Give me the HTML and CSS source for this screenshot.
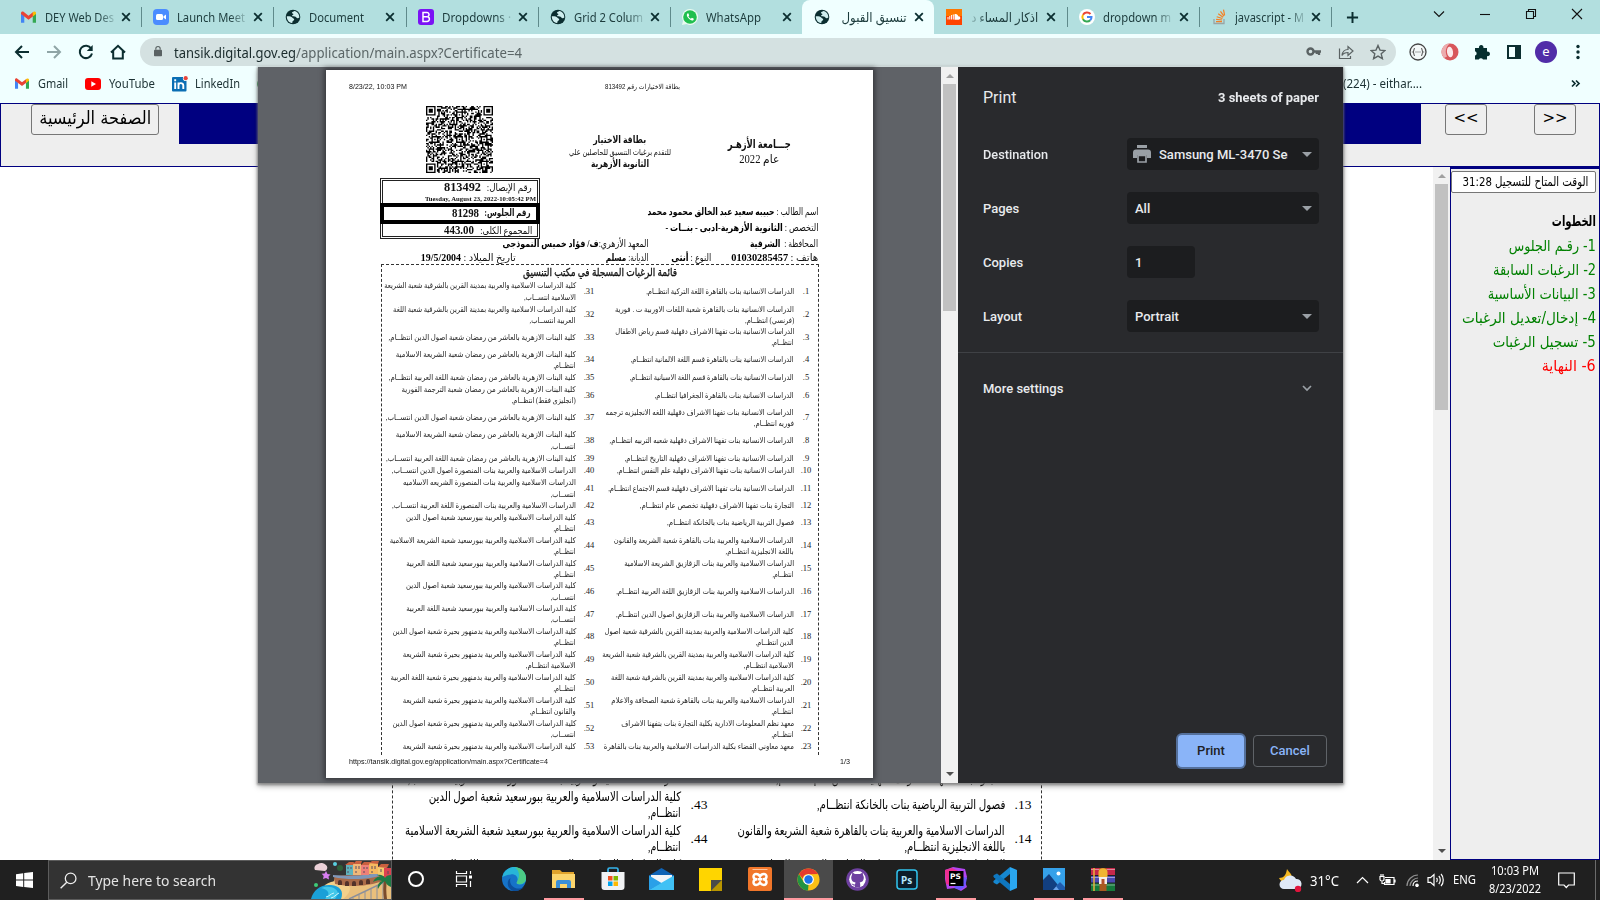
FILE: index.html
```html
<!DOCTYPE html>
<html lang="en">
<head>
<meta charset="utf-8">
<title>تنسيق القبول</title>
<link rel="stylesheet" href="styles.css">
</head>
<body>
<svg width="0" height="0" class="defs">
  <symbol id="x" viewBox="0 0 10 10"><path d="M1.2 1.2l7.6 7.6M8.8 1.2L1.2 8.8" stroke="currentColor" stroke-width="1.8" fill="none"/></symbol>
  <symbol id="globe" viewBox="0 0 16 16"><circle cx="8" cy="8" r="7.300" fill="#0b2e30"/><path d="M1.800 7.200c2.500-.2 4.700.3 5.400 1.400.5.900 2 .8 2 1.900 0 1.200-1.400 1-1.700 1.900-.2.700.2 1.200-.6 1.700C3.800 13.500 1.700 10.800 1.800 7.200zM9.300 2c-.6 1-2.300.7-2.400 1.700-.1.800 1.500.6 1.500 1.500 0 .8-1.500.6-1.300 1.600.2.900 2.500.6 3.500 1 .9.400 1 1.500 2 1.500.8 0 1-.6 1.700-.6C14.500 5.300 12.400 2.600 9.300 2z" fill="#cfeeee"/></symbol>
  <symbol id="gmail" viewBox="0 0 16 12"><path d="M0 1.500V12h3.500V5z" fill="#4285f4"/><path d="M16 1.500V12h-3.500V5z" fill="#34a853"/><path d="M0 1.700C0 .3 1.600-.4 2.700.5L8 4.600 13.300.5v4.300L8 8.900 3.500 5.400 0 2.800z" fill="#ea4335"/><path d="M12.500 1.100C14-.5 16 .3 16 1.800v1l-3.500 2.700z" fill="#fbbc04"/></symbol>
  <symbol id="chrome" viewBox="0 0 24 24"><circle cx="12" cy="12" r="11.500" fill="#fbc116"/><path d="M2 6.300A11.500 11.500 0 0 1 22 6.300L12 6.500z" fill="#e33b2e"/><path d="M2 6.300L7.200 15 12 17.500 11.500 23.500A11.500 11.500 0 0 1 2 6.300z" fill="#229342"/><path d="M22 6.300H12A5.700 5.700 0 0 0 6 11L2 6.300z" fill="#e33b2e"/><circle cx="12" cy="12" r="5.600" fill="#fff"/><circle cx="12" cy="12" r="4.400" fill="#1a73e8"/></symbol>
</svg>

<header class="tabs">
  <div class="tab"><svg class="ico"><use href="#gmail"/></svg><span class="lbl" data-w="69">DEY Web Des</span><svg class="cls"><use href="#x"/></svg></div>
  <div class="tab"><svg class="ico" viewBox="0 0 16 16"><rect width="16" height="16" rx="4" fill="#4a8cff"/><rect x="3" y="5" width="7" height="6" rx="1.500" fill="#fff"/><path d="M10.500 7.300L13 5.500v5l-2.500-1.800z" fill="#fff"/></svg><span class="lbl" data-w="68">Launch Meet</span><svg class="cls"><use href="#x"/></svg></div>
  <div class="tab"><svg class="ico"><use href="#globe"/></svg><span class="lbl nofade" data-w="55">Document</span><svg class="cls"><use href="#x"/></svg></div>
  <div class="tab"><svg class="ico" viewBox="0 0 16 16"><rect width="16" height="16" rx="3" fill="#7a12f5"/><path d="M5 3.500h3.700a2.100 2.100 0 0 1 .5 4.200 2.300 2.300 0 0 1-.3 4.700H5zM5 7.800h4" fill="none" stroke="#fff" stroke-width="1.500"/></svg><span class="lbl" data-w="69">Dropdowns ·</span><svg class="cls"><use href="#x"/></svg></div>
  <div class="tab"><svg class="ico"><use href="#globe"/></svg><span class="lbl" data-w="69">Grid 2 Colum</span><svg class="cls"><use href="#x"/></svg></div>
  <div class="tab nosep"><svg class="ico" viewBox="0 0 16 16"><path d="M8 0a8 8 0 1 1-3.600 15.100L0 16l1-4.200A8 8 0 0 1 8 0z" fill="#e9fbf0"/><circle cx="8" cy="8" r="6.800" fill="#1fbf4f"/><path d="M5.700 4.200c-1.500 1-1 3 .6 4.900 1.700 1.900 3.900 3 5.200 1.800l.3-1.200-1.900-1-1 1C7.800 9.300 6.800 8.300 6.400 7.300l.8-.9-.7-2z" fill="#fff"/></svg><span class="lbl nofade" data-w="55">WhatsApp</span><svg class="cls"><use href="#x"/></svg></div>
  <div class="tab active"><svg class="ico"><use href="#globe"/></svg><span class="lbl ar nofade" data-w="65">تنسيق القبول</span><svg class="cls"><use href="#x"/></svg></div>
  <div class="tab"><svg class="ico" viewBox="0 0 16 16"><rect width="16" height="16" fill="#f40"/><path d="M0 0h16v7H0z" fill="#ff7700"/><path d="M2 8v2.500M3.800 7v3.500M5.600 6v4.500M7.300 5.500v5" stroke="#fff" stroke-width="1"/><path d="M8.500 5.300c2-.8 3.400 .4 3.600 2 1.200-.2 2.200 .5 2.200 1.700s-.9 1.700-1.700 1.700H8.500z" fill="#fff"/></svg><span class="lbl ar" data-w="67">اذكار المساء د</span><svg class="cls"><use href="#x"/></svg></div>
  <div class="tab"><svg class="ico" viewBox="0 0 16 16"><circle cx="8" cy="8" r="8" fill="#fff"/><g fill="none" stroke-width="2"><path d="M11.500 5A4.600 4.600 0 0 0 4 5.800" stroke="#ea4335"/><path d="M4 5.800a4.600 4.600 0 0 0 0 4.600" stroke="#fbbc04"/><path d="M4 10.300a4.600 4.600 0 0 0 7.200 1" stroke="#34a853"/><path d="M11.200 11.300A4.600 4.600 0 0 0 12.500 8H8" stroke="#4285f4"/></g></svg><span class="lbl" data-w="68">dropdown m</span><svg class="cls"><use href="#x"/></svg></div>
  <div class="tab"><svg class="ico" viewBox="0 0 16 16"><path d="M3 10v4.500h10V10" fill="none" stroke="#9aa5a6" stroke-width="1.300"/><path d="M5 12.700h6M5.100 10.400l6 .6M5.700 7.700l5.700 1.800M7.200 4.800l4.900 3.400M9.500 2.300l3.400 4.900M12.500.7l1.100 5.600" stroke="#f48024" stroke-width="1.200"/></svg><span class="lbl" data-w="69">javascript - M</span><svg class="cls"><use href="#x"/></svg></div>
  <svg class="plus" viewBox="0 0 14 14"><path d="M7 1v12M1 7h12" stroke="#0b2e30" stroke-width="2.100"/></svg>
  <div class="win">
    <svg viewBox="0 0 12 12"><path d="M1 3.500l5 5 5-5"/></svg>
    <svg viewBox="0 0 12 12"><path d="M1 6.500h10"/></svg>
    <svg viewBox="0 0 12 12"><path d="M1.500 3.500h7v7h-7zM3.500 3.500v-2h7v7h-2"/></svg>
    <svg viewBox="0 0 12 12"><path d="M1 1l10 10M11 1L1 11"/></svg>
  </div>
</header>

<div class="toolbar">
  <svg class="nav" viewBox="0 0 16 16"><path d="M15 8H2M8 2L2 8l6 6" /></svg>
  <svg class="nav dim" viewBox="0 0 16 16"><path d="M1 8h13M8 2l6 6-6 6"/></svg>
  <svg class="nav" viewBox="0 0 16 16"><path d="M13.200 4.500A6.200 6.200 0 1 0 14 9.500"/><path d="M14.700 1v6H8.800z" fill="#0b2e30" stroke="none"/></svg>
  <svg class="nav home" viewBox="0 0 16 16"><path d="M1 8.500L8 1.800l7 6.700M3.200 7v7.500h9.600V7"/></svg>
  <div class="omni">
    <svg class="lock" viewBox="0 0 10 13"><rect y="5" width="10" height="8" rx="1" fill="#5a6263"/><path d="M2.300 5V3.500a2.700 2.700 0 0 1 5.400 0V5" fill="none" stroke="#5a6263" stroke-width="1.400"/></svg>
    <span class="url" data-w="122">tansik.digital.gov.eg</span><span class="url path" data-w="226">/application/main.aspx?Certificate=4</span>
    <div class="omni-r">
      <svg width="16" height="16" viewBox="0 0 16 16"><circle cx="4.500" cy="7.500" r="3" fill="none" stroke="#5a6263" stroke-width="2.400"/><path d="M7 7.500h8M13 8v3M10.800 8v2" stroke="#5a6263" stroke-width="2.300"/></svg>
      <svg width="16" height="16" viewBox="0 0 16 16"><path d="M1.500 4.500v10h11v-2.500M4 11.500c.5-4 3-6 6-6V2.500L15 7l-5 4.500V8.500c-3 0-4.800 1-6 3z" fill="none" stroke="#5a6263" stroke-width="1.200"/></svg>
      <svg width="16" height="16" viewBox="0 0 16 16"><path d="M8 1.500l2 4.600 5 .4-3.800 3.300 1.200 4.900L8 12.100l-4.400 2.600 1.200-4.900L1 6.500l5-.4z" fill="none" stroke="#5a6263" stroke-width="1.400"/></svg>
    </div>
  </div>
  <div class="ext">
    <svg viewBox="0 0 18 18"><circle cx="9" cy="9" r="8" fill="#f4f8f8" stroke="#444" stroke-width="1.300"/><path d="M6 5.500c-2 0-.5 3-2 3.500 1.500.5 0 3.500 2 3.500M12 5.500c2 0 .5 3 2 3.500-1.500.5 0 3.500-2 3.500M6.500 9h1M8.500 9h1M10.500 9h1" fill="none" stroke="#555" stroke-width="1.100"/></svg>
    <svg viewBox="0 0 18 18"><circle cx="9" cy="9" r="8.500" fill="#d8575b"/><ellipse cx="9" cy="9" rx="3" ry="5.300" fill="#fbe9ea" transform="rotate(-8 9 9)"/><path d="M9 .5A8.500 8.500 0 0 0 3 15l3-1.500C3.500 9 5 3 9 .5z" fill="#ecacae"/></svg>
    <svg viewBox="0 0 18 18"><path d="M2 5h4a2.300 2.300 0 1 1 4.400 0H14v3.700a2.300 2.300 0 1 1 0 4.400V16.500h-4a2.300 2.300 0 0 0-4.200 0H2V12.600a2.300 2.300 0 0 0 0-4.400z" fill="#062f2f"/></svg>
    <svg viewBox="0 0 18 18"><path d="M3 3h12v12H3z" fill="none" stroke="#0b2e30" stroke-width="2"/><path d="M10 3h5v12h-5z" fill="#0b2e30"/></svg>
    <span class="avatar">e</span>
    <svg class="dots" viewBox="0 0 18 18"><circle cx="9" cy="3.500" r="1.700"/><circle cx="9" cy="9" r="1.700"/><circle cx="9" cy="14.500" r="1.700"/></svg>
  </div>
</div>

<div class="marks">
  <svg class="bi g" width="14" height="11"><use href="#gmail"/></svg><span data-w="30">Gmail</span>
  <svg class="bi yt" width="16" height="12" viewBox="0 0 16 12"><rect width="16" height="12" rx="3" fill="#f00"/><path d="M6.300 3.300v5.400L11 6z" fill="#fff"/></svg><span data-w="46">YouTube</span>
  <svg class="bi li" width="16" height="16" viewBox="0 0 16 16"><rect y="1" width="14.500" height="14.500" rx="1" fill="#0a6eb4"/><path d="M3.200 6.500v6.500M3.200 3.300v2M6.500 13V6.500M6.500 9.500c0-3 4.800-3.200 4.800 0V13" fill="none" stroke="#fff" stroke-width="1.900"/><circle cx="13.700" cy="2.200" r="2.800" fill="#f0ffff"/><circle cx="13.700" cy="2.200" r="2.100" fill="#e8453c"/></svg><span data-w="45">LinkedIn</span>
  <i class="green"></i>
  <span class="mail" data-w="79">(224) - eithar....</span>
  <svg class="more" viewBox="0 0 10 8"><path d="M1 1l3 3-3 3M5 1l3 3-3 3" fill="none" stroke="#0b2e30" stroke-width="1.700"/></svg>
</div>

<section class="top">
  <div class="c1"><span class="btn home-b" dir="rtl"><span data-w="112">الصفحة الرئيسية</span></span></div>
  <div class="band"></div>
  <div class="c2"><span class="btn sm">&lt;&lt;</span><span class="btn sm">&gt;&gt;</span></div>
</section>

<section class="mid">
  <div class="content"><div class="list big" id="pageList"></div></div>
  <div class="sb page-sb"><i class="up"></i><i class="thumb"></i><i class="down"></i></div>
  <aside dir="rtl">
    <div class="timer"><span data-w="126">الوقت المتاح للتسجيل 31:28</span></div>
    <p class="h"><span data-w="44">الخطوات</span></p>
    <p><span data-w="87">1- رقـم الجلوس</span></p>
    <p><span data-w="103">2- الرغبات السابقة</span></p>
    <p><span data-w="108">3- البيانات الأساسية</span></p>
    <p><span data-w="134">4- إدخال/تعديل الرغبات</span></p>
    <p><span data-w="103">5- تسجيل الرغبات</span></p>
    <p class="red"><span data-w="54">6- النهاية</span></p>
  </aside>
</section>

<footer class="task">
  <div class="start"><svg width="17" height="16" viewBox="0 0 17 16"><path d="M0 2.300L7.200 1.200V7.600H0zM8.200 1L17 0v7.600H8.200zM0 8.600h7.200V15L0 13.900zM8.200 8.600H17V16l-8.800-1.100z" fill="#fff"/></svg></div>
  <div class="search">
    <svg class="mag" viewBox="0 0 16 16"><circle cx="10" cy="6" r="5" fill="none" stroke="#eee" stroke-width="1.200"/><path d="M6.400 9.600L.6 15.400" stroke="#eee" stroke-width="1.300"/></svg>
    <span data-w="128">Type here to search</span>
    <svg class="art" viewBox="0 0 80 38">
      <path d="M24 17h50l6-3v24H16z" fill="#e9bf7c"/><path d="M14 24c8-6 20-5 24 1 3 4-2 10-6 13H8z" fill="#f3d08b"/>
      <path d="M0 38c2-9 10-15 20-14 9 1 13 6 10 14z" fill="#1aa0d8"/><path d="M10 27c8-3 17 0 17 6l-3 5H14c6-5 4-9-4-11z" fill="#43c8ea"/><path d="M15 36c4-1 4-3 8-4M20 37c4-1 4-3 8-5" stroke="#c9f4fb" fill="none"/>
      <path d="M23 15l55-3v5c-14 8-36 10-54 6z" fill="#a96a48"/><path d="M22 14c20 2 40 0 57-5v3c-16 6-38 8-57 4z" fill="#7f97b8"/>
      <path d="M27 24v-3a2 2 0 0 1 4 0v3M34 25v-3a2 2 0 0 1 4 0v3M41 25v-3a2 2 0 0 1 4 0v3M48 24v-3a2 2 0 0 1 4 0v3M55 23v-3a2 2 0 0 1 4 0v3" fill="#52322a"/>
      <path d="M35 4h7v10h-7z" fill="#5fb3bd"/><path d="M42 3h8v11h-8z" fill="#f0b878"/><path d="M50 4h8v10h-8z" fill="#ee8078"/><path d="M58 2h9v11h-9z" fill="#f5b95f"/><path d="M67 6h8v9h-8z" fill="#f2ca70"/><path d="M73 7h7v10h-7z" fill="#dd4250"/>
      <path d="M34 4l4-3h5l-1 3zM42 3l3-3h6l-1 3zM50 4l3-3h6l-1 3zM58 2l3-2h7l-1 3zM67 6l3-3h8l-2 4z" fill="#c9603f"/>
      <path d="M37 6v2M40 6v2M45 5v3M48 5v3M53 6v2M56 6v2M61 5v3M64 5v3M70 8v3M37 10v2M45 10v2M53 10v2M61 10v2M77 10v3" stroke="#5a4a60"/>
      <path d="M38 38l42-20" stroke="#8a8f9c" stroke-width="1.500"/><path d="M42 37v2M48 34v5M54 31v8M60 28v11M66 25v13M72 22v16" stroke="#8a8f9c"/>
      <path d="M73 19c-1 6-1 12 0 19h3c-1-7-1-13 0-19z" fill="#7b4c2c"/><path d="M74 18c-5-4-10-2-12 3 4-2 7-2 9-1-3 1-5 4-4 8 2-4 4-6 7-8 1 3 3 5 6 6V14c-3 0-5 1-6 3-1-2-4-4-8-3z" fill="#1e7a45"/>
      <circle cx="29" cy="7" r="3" fill="#2e5f38"/><path d="M4 9a4 4 0 0 1 3-6 6 6 0 0 1 8 1 3.500 3.500 0 0 1-1 6z" fill="#ecd1d8"/><path d="M15 10l1.500 3 3 .5-2 2 .5 3-3-1.500-3 1 .7-3-2-2.300 3-.3z" fill="#d77df0"/><circle cx="24" cy="3" r="2" fill="#5ad0e0"/><circle cx="5" cy="24" r="2" fill="#3ecb79"/>
    </svg>
  </div>
  <div class="tb n"><svg width="18" height="18" viewBox="0 0 18 18"><circle cx="9" cy="9" r="7" fill="none" stroke="#fff" stroke-width="2"/></svg></div>
  <div class="tb n"><svg width="18" height="16" viewBox="0 0 18 16" fill="none" stroke="#fff" stroke-width="1.200"><path d="M1.500 0v2.500h10V0M1.500 16v-2.500h10V16M1.500 5h10v6h-10zM15.500 0v3M15.500 10v6"/><path d="M14 4.500h3v3h-3z" fill="#fff" stroke="none"/></svg></div>
  <div class="tb e"><svg width="24" height="24" viewBox="0 0 24 24"><circle cx="12" cy="12" r="12" fill="#1673c8"/><path d="M.3 10C2 3 8-1 15 .4c6 1.400 9 6 9 11 0 4-3 6-6.500 6-2.500 0-3.500-1-2.500-2.500 2-4-1-8-6-7.500-4 .3-7 2-8.700 2.600z" fill="#27b5d8"/><path d="M13 .1c7 .5 11 5.500 11 11 0 4-3 6.200-6.500 6.200-2.500 0-3.500-1-2.500-2.500 3-5 3-10-2-14.700z" fill="#5ad36a" opacity=".75"/><path d="M8.500 11c-2 6 3 11 9 10.500 2-.2 3.500-1 4.500-2-2 3-6 5-10.500 4.500C5 22 4 14 8.500 11z" fill="#0c4f9c"/></svg></div>
  <div class="tb u"><svg width="23" height="20" viewBox="0 0 23 20"><path d="M0 1h8l2 2h12v16H0z" fill="#e0a32c"/><path d="M0 5h23v14H0z" fill="#fcd56c"/><path d="M4 19v-6a2 2 0 0 1 2-2h11a2 2 0 0 1 2 2v6h-4v-4H8v4z" fill="#3a8fd8"/></svg></div>
  <div class="tb"><svg width="24" height="24" viewBox="0 0 24 24"><path d="M7 6V2.500C7 1.500 7.500 1 8.500 1h7c1 0 1.500.5 1.500 1.500V6" fill="none" stroke="#35b4ec" stroke-width="1.700"/><path d="M.5 5h23v15a3 3 0 0 1-3 3h-17a3 3 0 0 1-3-3z" fill="#f1f2f4"/><path d="M7 9h4.500v4.500H7z" fill="#f25022"/><path d="M12.500 9H17v4.500h-4.500z" fill="#7fba00"/><path d="M7 14.500h4.500V19H7z" fill="#00a4ef"/><path d="M12.500 14.500H17V19h-4.500z" fill="#ffb900"/></svg></div>
  <div class="tb"><svg width="25" height="22" viewBox="0 0 25 22"><path d="M0 7.500L12.500 0 25 7.500V22H0z" fill="#0f63b5"/><path d="M2 7h21v8H2z" fill="#f2f5f8"/><path d="M0 7.500L12.500 15 0 22z" fill="#2aa0e8"/><path d="M25 7.500L0 22h25z" fill="#40c1f5"/></svg></div>
  <div class="tb"><svg width="23" height="23" viewBox="0 0 23 23"><path d="M0 0h23v12L12 23H0z" fill="#ffd500"/><path d="M12 23V12h11z" fill="#4a4a4a"/><path d="M12 23L23 12v11z" fill="#b99500"/></svg></div>
  <div class="tb"><svg width="24" height="24" viewBox="0 0 24 24"><rect width="24" height="24" rx="2" fill="#f1762a"/><path d="M4.500 2.500h15" stroke="#ffc49c"/><path d="M12 9.500C10.500 6.500 5.500 6 5.500 9.500c0 2 1.500 2.800 3.500 2.800-2 0-3.500.7-3.500 3 0 3.700 5 3.200 6.500.2 1.500 3 6.500 3.500 6.500-.2 0-2.300-1.500-3-3.500-3 2 0 3.500-.8 3.500-2.800C18.500 6 13.500 6.500 12 9.500zM9.500 12.300h5" fill="none" stroke="#fff" stroke-width="2.500"/></svg></div>
  <div class="tb on"><svg width="23" height="23"><use href="#chrome"/></svg></div>
  <div class="tb"><svg width="23" height="23" viewBox="0 0 23 23"><circle cx="11.500" cy="11.500" r="11.300" fill="#6e40a0"/><circle cx="11.500" cy="11.300" r="8.300" fill="#fff"/><path d="M6 7l.3-2.500L9 6h5l2.700-1.500L17 7c1.500 2 1.200 7-3.300 7.500.8 1 .5 3 .5 5H8.800v-2C7 17.500 6.500 17 5.500 15.500c1.500 0 1.500 1.200 3.500 1l.5-2C5 14 4.500 9 6 7z" fill="#6e40a0"/></svg></div>
  <div class="tb"><svg width="22" height="21" viewBox="0 0 22 21"><rect x="1" y="1" width="20" height="19" rx="3" fill="#0b1c2a" stroke="#31c5f0" stroke-width="1.500"/><text x="5" y="14.500" class="ps">Ps</text></svg></div>
  <div class="tb u"><svg width="24" height="24" viewBox="0 0 24 24"><path d="M1 3l8-3 12 2 2 8-2 5 2 5-6 4-6-3-8 1L1 12z" fill="#b345f1"/><path d="M1 3l7-2 6 3-8 14-4-1z" fill="#ee2f8f"/><path d="M17 9l6 2-2 9-5 3-6-2z" fill="#6b57ff"/><rect x="5" y="4" width="14.500" height="15" fill="#000"/><text x="6" y="12" class="pst">PS</text><path d="M6.500 16.500h5" stroke="#fff" stroke-width="1.200"/></svg></div>
  <div class="tb"><svg width="24" height="24" viewBox="0 0 24 24"><path d="M17 0l7 3v18l-7 3z" fill="#2aa7f0"/><path d="M17 0v7L4 17.500 1 16c-1-1-.8-1.700 0-2.400z" fill="#1687d0"/><path d="M17 24v-7L4 6.500 1 8c-1 1-.8 1.700 0 2.400z" fill="#0f77bf"/></svg></div>
  <div class="tb u"><svg width="22" height="22" viewBox="0 0 22 22"><rect width="22" height="22" fill="#35a1ea"/><path d="M0 22V12l6-6 13 16z" fill="#123f80"/><path d="M10 22l7-8 5 5v3z" fill="#6aa2e8"/><path d="M13 18l4-4 5 5v3h-6z" fill="#1f5cae"/><circle cx="15.500" cy="5.500" r="2" fill="#fff"/></svg></div>
  <div class="tb u"><svg width="24" height="23" viewBox="0 0 24 23"><path d="M0 0h24v7H0z" fill="#c6284a"/><path d="M0 8h24v6.500H0z" fill="#4a48b0"/><path d="M0 15.500h24V23H0z" fill="#167a3c"/><path d="M0 1.500h24M0 9.500h24M0 17h24" stroke="#fff" stroke-opacity=".45"/><path d="M3 0v23" stroke="#e9b23c" stroke-width="1.500"/><path d="M8.500 0h7v23h-7z" fill="#a85a20"/><path d="M7.500 4c0-5 9-5 9 0v5h-9z" fill="#f0b432"/><path d="M8 9h8v7H8z" fill="#f5efe8"/><path d="M10.500 11h3v5h-3z" fill="#b5502a"/></svg></div>
  <div class="tray">
    <svg class="wx" width="23" height="23" viewBox="0 0 23 23"><path d="M8 0c-1 6-3 9-8 9 2 5 9 6 12 0C14 5 10 4 8 0z" fill="#f5b820"/><path d="M5 20a4.500 4.500 0 0 1 0-9 6.500 6.500 0 0 1 12-1 5 5 0 0 1 1 10z" fill="#dfe8f6"/><circle cx="19" cy="20" r="3.200" fill="#e0143c"/></svg>
    <span class="deg" data-w="29">31°C</span>
    <svg class="t1" width="13" height="8" viewBox="0 0 13 8"><path d="M1 7l5.500-5.500L12 7"/></svg>
    <svg class="t2" width="17" height="14" viewBox="0 0 17 14"><path d="M6 4.500h9v7H5.500V9M16 6.500v3M1 3.500v3c0 2 4 2 4 0v-3zM2 3.500V1M4 3.500V1M3 8v2.500h2"/><path d="M7 6.500h4v3.500H7z" fill="#fff"/></svg>
    <svg class="t3" width="13" height="13" viewBox="0 0 13 13"><g opacity=".5"><path d="M1 12C1 6 6 1 12 1M4 12c0-4 4-8 8-8"/></g><path d="M7 12c0-3 2-5 5-5"/><circle cx="11" cy="11.300" r="1.200" fill="#fff"/></svg>
    <svg class="t4" width="17" height="14" viewBox="0 0 17 14"><path d="M1 4.700h2.500L7 1.500v11L3.500 9.300H1zM9.500 5c1 1 1 3 0 4M11.800 3c2 2 2 6 0 8M14 1c3 3 3 9 0 12"/></svg>
    <span class="eng" data-w="23">ENG</span>
    <div class="clock"><span data-w="48">10:03 PM</span><span data-w="52">8/23/2022</span></div>
    <svg class="t5" width="17" height="17" viewBox="0 0 17 17"><path d="M.7 1h15.600v12H10.500L8.300 15.500 6 13H.7z"/></svg>
    <i class="peek"></i>
  </div>
</footer>

<div class="dialog">
  <div class="preview">
    <div class="paper">
      <div class="ph"><span data-w="58">8/23/22, 10:03 PM</span><span dir="rtl" data-w="75">بطاقة الاختيارات رقم 813492</span></div>
      <div class="mast">
        <svg id="qr" viewBox="0 0 49 49" preserveAspectRatio="none"></svg>
        <div class="card" dir="rtl"><b data-w="53">بطاقة الاختيار</b><span data-w="102">للتقدم برغبات التنسيق للحاصلين علي</span><b data-w="58">الثانوية الأزهرية</b></div>
        <div class="uni" dir="rtl"><b data-w="63">جـــامعة الأزهـر</b><span data-w="40">عام 2022</span></div>
      </div>
      <div class="info">
        <div class="nums" dir="rtl">
          <div class="n1"><div><span data-w="45">رقم الإيصال:</span><b data-w="37">813492</b></div><b class="dt" dir="ltr" data-w="111">Tuesday, August 23, 2022-10:05:42 PM</b></div>
          <div class="n2"><b data-w="46">رقم الجلوس:</b><b data-w="27">81298</b></div>
          <div class="n3"><span data-w="52">المجموع الكلي:</span><b data-w="30">443.00</b></div>
        </div>
        <div class="stu" dir="rtl"><span data-w="171">اسم الطالب : <b>حبيبه سعيد عبد الخالق محمود محمد</b></span><span data-w="153">التخصص : <b>الثانوية الأزهرية-ادبى - بنــات -</b></span></div>
      </div>
      <div class="ir" dir="rtl"><span data-w="68">المحافظة : <b>&nbsp;الشرقية</b></span><span class="g101" data-w="146">المعهد الأزهري:<b>ف/ فؤاد خميس النموذجى</b></span></div>
      <div class="ir" dir="rtl"><span data-w="87">هاتف : <b>01030285457</b></span><span class="g20" data-w="40">النوع : <b>أنثى</b></span><span class="g22" data-w="43">الديانة: <b>مسلم</b></span><span class="g90" data-w="95">تاريخ الميلاد : <b>19/5/2004</b></span></div>
      <div class="list small"><div class="lt" dir="rtl"><b data-w="154">قائمة الرغبات المسجلة في مكتب التنسيق</b></div><div id="prevList"></div></div>
      <div class="pf"><span data-w="199">https://tansik.digital.gov.eg/application/main.aspx?Certificate=4</span><span data-w="10">1/3</span></div>
    </div>
  </div>
  <div class="sb prev-sb"><i class="up"></i><i class="thumb"></i><i class="down"></i></div>
  <div class="panel">
    <div class="pt"><span class="ttl">Print</span><span class="sheets" data-w="101">3 sheets of paper</span></div>
    <div class="row"><label data-w="65">Destination</label><div class="sel dest"><svg width="18" height="18" viewBox="0 0 18 18"><path d="M4 0h10v3H4z" fill="#9aa0a6"/><path d="M3 4.500h12a3 3 0 0 1 3 3V13h-4v-3H4v3H0V7.500a3 3 0 0 1 3-3z" fill="#9aa0a6"/><path d="M5 10.500h8v6.500H5z" fill="none" stroke="#9aa0a6" stroke-width="1.700"/></svg><span class="dn">Samsung ML-3470 Series</span><i></i></div></div>
    <div class="row"><label>Pages</label><div class="sel">All<i></i></div></div>
    <div class="row"><label>Copies</label><div class="sel short">1</div></div>
    <div class="row"><label>Layout</label><div class="sel">Portrait<i></i></div></div>
    <div class="ms"><span>More settings</span><svg width="10" height="7" viewBox="0 0 10 7"><path d="M1 1l4 4 4-4" fill="none" stroke="#9aa0a6" stroke-width="1.700"/></svg></div>
    <div class="acts"><button class="pr">Print</button><button class="ca">Cancel</button></div>
  </div>
</div>
<script src="app.js"></script>
</body>
</html>
```
FILE: styles.css
```css
* { box-sizing: border-box; }
body { margin: 0; width: 1600px; height: 900px; overflow: hidden; position: relative; background: #fff; font-family: "Noto Sans", "DejaVu Sans", sans-serif; font-size: 12px; display: flex; flex-direction: column; }
svg { display: block; flex: none; }
.defs { position: absolute; }
.fit { display: inline-block; white-space: nowrap; flex: none; }
.fit > .in { display: inline-block; transform-origin: 0 50%; }
[dir=rtl] .fit > .in, .ar > .in, .fit[dir=rtl] > .in { transform-origin: 100% 50%; }
[dir=rtl] .fit[dir=ltr] > .in { transform-origin: 0 50%; }

/* tab strip */
.tabs { height: 34px; flex: none; background: #b2dfdf; display: flex; align-items: center; padding-left: 9px; color: #1c3b3c; }
.tab { width: 132.2px; height: 34px; flex: none; display: flex; align-items: center; padding-left: 12px; position: relative; }
.tab::after { content: ""; position: absolute; right: -1px; top: 7px; width: 1px; height: 20px; background: #5f8a8b; }
.nosep::after, .active::after { display: none; }
.ico { width: 16px; height: 16px; margin-right: 8px; }
.tab:first-child .ico { height: 12px; width: 15px; margin-right: 9px; }
.lbl { -webkit-mask-image: linear-gradient(90deg, #000 78%, rgba(0,0,0,.2)); mask-image: linear-gradient(90deg, #000 78%, rgba(0,0,0,.2)); }
.ar { direction: rtl; margin-left: auto; margin-right: 28px; font-size: 13px; -webkit-mask-image: linear-gradient(270deg, #000 78%, rgba(0,0,0,.2)); mask-image: linear-gradient(270deg, #000 78%, rgba(0,0,0,.2)); }
.lbl.nofade { -webkit-mask-image: none; mask-image: none; }
.cls { width: 10px; height: 10px; position: absolute; left: 112px; top: 12px; color: #0b2e30; }
.active { background: #f0ffff; border-radius: 8px 8px 0 0; }
.plus { width: 13px; height: 13px; margin-left: 15px; }
.win { display: flex; gap: 34px; margin: -6px 17px 0 auto; }
.win svg { width: 12px; height: 12px; fill: none; stroke: #111; stroke-width: 1.1; }

/* toolbar */
.toolbar { height: 36px; flex: none; background: #f0ffff; display: flex; align-items: center; padding-left: 14px; }
.nav { width: 16px; height: 16px; margin-right: 16px; fill: none; stroke: #0b2e30; stroke-width: 2; }
.nav.dim { stroke: #8fa5a6; }
.home { margin-right: 14px; }
.omni { width: 1256px; height: 28px; border-radius: 14px; background: #d4e1e1; display: flex; align-items: center; padding-left: 14px; font-size: 14px; color: #1a2b2c; }
.lock { width: 8px; height: 12px; margin: -3px 12px 0 0; }
.path { color: #5b6667; }
.omni-r { margin-left: auto; display: flex; gap: 16px; padding-right: 10px; }
.ext { display: flex; align-items: center; margin-left: 13px; gap: 14px; }
.ext svg { width: 18px; height: 18px; }
.avatar { width: 22px; height: 22px; border-radius: 50%; background: #512da8; color: #fff; font-size: 13px; line-height: 21px; text-align: center; margin-left: -2px; }
.dots { fill: #0b2e30; margin-left: -2px; }

/* bookmarks */
.marks { height: 33px; flex: none; background: #f0ffff; display: flex; align-items: center; padding: 0 19px 6px 15px; color: #1c3133; }
.bi { margin-right: 9px; }
.yt { margin-left: 17px; margin-right: 8px; }
.li { margin-left: 17px; margin-right: 7px; }
.green { width: 12px; height: 12px; border-radius: 50%; background: #34a853; margin-left: 17px; }
.mail { margin-left: auto; margin-right: 149px; }
.more { width: 10px; height: 9px; }

/* top frame */
.top { height: 64px; flex: none; border: 1px solid #000080; background: #eee; display: flex; align-items: flex-start; }
.c1 { width: 178px; padding: 0 0 0 30px; }
.band { width: 1242px; height: 40px; background: #000080; }
.btn { display: flex; align-items: center; justify-content: center; height: 31px; border: 1px solid #767676; border-radius: 3px; background: #efefef; color: #000; font-family: "DejaVu Sans", sans-serif; font-size: 18px; }
.home-b { width: 128px; padding-bottom: 5px; }
.c2 { display: flex; gap: 47px; padding-left: 24px; }
.sm { width: 42px; padding-bottom: 4px; font-size: 15px; }

/* lower frames */
.mid { height: 693px; flex: none; display: flex; }
.content { width: 1433px; overflow: hidden; padding: 603px 0 0 392px; background: #fff; }
.sb { width: 17px; background: #f1f1f1; display: flex; flex-direction: column; align-items: center; }
.sb i { flex: none; }
.up { border: 4px solid transparent; border-top: 0; border-bottom: 4px solid #a0a0a0; margin: 7px 0 6px; }
.thumb { width: 13px; height: 226px; background: #c1c1c1; }
.down { border: 4px solid transparent; border-bottom: 0; border-top: 4px solid #505050; margin-top: auto; margin-bottom: 7px; }
aside { width: 150px; border: 1px solid #000080; border-top-width: 2px; background: #eee; padding: 2px 3px 0 0; color: #008000; font-family: "DejaVu Sans", sans-serif; font-size: 15px; }
aside p { margin: 0; height: 24px; line-height: 24px; }
aside .h { color: #000; font-weight: bold; margin-bottom: 1px; }
aside .red { color: #f00; }
.timer { width: 145px; height: 22px; border: 1px solid #767676; border-radius: 2px; background: #fff; color: #000; font-size: 13px; line-height: 19px; padding-right: 7px; margin-bottom: 16px; }

/* lists of wishes */
.list { border: 1px dashed #333; border-top: 0; border-bottom: 0; color: #000; font-family: "Liberation Serif", "DejaVu Sans", serif; }
.lr { display: grid; align-items: center; overflow: visible; }
.lr > div { display: flex; flex-direction: column; align-items: flex-start; direction: rtl; }
.lr > .no { align-items: center; }
.big { width: 650px; font-size: 13px; line-height: 16px; }
.big .no { font-size: 13.500px; }
.big .lr { grid-template-columns: 288px 36px 288px 36px; }
.small { width: 438px; height: 491px; overflow: hidden; margin-left: 55px; border-top: 1px dashed #333; font-size: 8px; line-height: 11.3px; color: #222; }
.small .lr { grid-template-columns: 194px 26px 192px 24px; }
.small .no { font-size: 8.5px; }
.lt { height: 15px; line-height: 14px; font-size: 11px; display: flex; justify-content: center; }
.lt b { font-weight: 400; -webkit-text-stroke: .3px #000; }

/* taskbar */
.task { height: 40px; flex: none; background: #202020; display: flex; color: #fff; align-items: stretch; }
.start { width: 48px; display: flex; align-items: center; justify-content: center; padding-left: 1px; }
.search { width: 344px; background: #333; border: 1px solid #5c5c5c; display: flex; align-items: center; font-size: 14.5px; color: #e4e4e4; padding-left: 11px; }
.mag { width: 17px; height: 17px; margin-right: 11px; }
.art { width: 80px; height: 38px; margin-left: auto; }
.tb { width: 49px; flex: none; display: flex; align-items: center; justify-content: center; border-bottom: 2px solid transparent; }
.tb.n { width: 48px; }
.tb.e { width: 51px; }
.tb.u { background: linear-gradient(#ff9aa0, #ff9aa0) 50% 100%/40px 2px no-repeat; border: 0; padding-bottom: 2px; }
.tb.on { background: #4a4a4a; border-bottom-color: #ff9aa0; }
.ps { font: bold 10px "Noto Sans"; fill: #b6e6ff; }
.pst { font: bold 7.5px "DejaVu Sans"; fill: #fff; }
.tray { margin-left: auto; width: 321px; display: flex; align-items: center; }
.tray > svg:not(.wx) { fill: none; stroke: #fff; stroke-width: 1.2; }
.deg { margin-left: 8px; font-size: 14px; }
.t1 { margin-left: 17px; } .t2 { margin-left: 10px; } .t3 { margin-left: 10px; } .t4 { margin-left: 8px; }
.eng { margin-left: 9px; margin-top: -2px; }
.clock { width: 52px; margin-left: 13px; display: flex; flex-direction: column; align-items: center; line-height: 18px; }
.t5 { margin-left: 17px; }
.peek { width: 1px; height: 40px; background: #6b6b6b; margin-left: 20px; }

/* print dialog */
.dialog { position: absolute; left: 258px; top: 67px; width: 1085px; height: 716px; display: flex; box-shadow: 0 1px 2px 1px rgba(120,120,120,.7), 0 3px 6px rgba(0,0,0,.35); }
.preview { width: 683px; background: #5f6267; padding: 3px 0 0 68px; }
.prev-sb .thumb { height: 227px; }
.paper { width: 547px; height: 708px; background: #fff; box-shadow: 0 0 5px 2px rgba(40,42,46,.75); color: #111; font-family: "Liberation Serif", "DejaVu Sans", serif; }
.ph { height: 36px; padding: 11px 0 0 23px; display: flex; gap: 198px; font: 7px/12px "Liberation Sans", "DejaVu Sans", sans-serif; }
.mast { height: 72px; display: flex; }
#qr { width: 67px; height: 67px; margin-left: 100px; }
.card { width: 102px; margin-left: 76px; padding-top: 28px; display: flex; flex-direction: column; align-items: center; font-size: 8.500px; line-height: 12px; }
.card b { font-size: 10px; }
.uni { width: 64px; margin-left: 56px; padding-top: 31px; display: flex; flex-direction: column; align-items: center; font-size: 11px; line-height: 15px; }
.uni span { font-size: 12px; }
.info { height: 61px; display: flex; font-size: 9px; }
.nums { width: 160px; margin-left: 54px; border: 3px double #222; font-size: 10px; }
.n1 { height: 22px; line-height: 13px; padding-right: 5px; }
.n1 > div { display: flex; gap: 6px; height: 14px; }
.n1 > div b, .n2 b + b, .n3 b { font-size: 12px; }
.n1 .dt { font-size: 6.500px; line-height: 8px; margin-right: -4px; display: block; }
.n2 { height: 21px; margin: 0 -3px; border: 4px solid #000; display: flex; gap: 6px; line-height: 12px; padding-right: 5px; }
.n3 { height: 14px; line-height: 13px; display: flex; gap: 6px; padding-right: 5px; }
.stu { width: 278px; padding-top: 26px; display: flex; flex-direction: column; align-items: flex-start; line-height: 16px; font-size: 10px; }
.stu b, .ir b { color: #000; }
.ir { width: 492px; height: 14px; line-height: 14px; font-size: 10px; display: flex; margin-top: -2px; }
.ir + .ir { margin-top: 0; height: 13px; }
.g101 { margin-right: 101px; } .g20 { margin-right: 20px; } .g22 { margin-right: 22px; } .g90 { margin-right: 90px; }
.pf { display: flex; justify-content: space-between; padding: 1px 23px 0; font: 7px/12px "Liberation Sans", sans-serif; }

.panel { width: 385px; background: #292a2d; color: #e8eaed; font-family: Roboto, sans-serif; font-size: 13px; font-weight: 500; display: flex; flex-direction: column; }
.pt { height: 61px; display: flex; align-items: center; justify-content: space-between; padding: 0 24px 1px 25px; }
.ttl { font-size: 16px; font-weight: 400; }
.sheets { font-weight: 700; }
.row { height: 54px; display: flex; align-items: center; padding-left: 25px; }
.row label { flex: none; margin-right: auto; }
.sel { width: 192px; height: 32px; margin-right: 24px; border-radius: 4px; background: #1c1d1f; display: flex; align-items: center; padding: 0 7px 0 8px; flex: none; }
.sel i { border: 5px solid transparent; border-bottom: 0; border-top-color: #9aa0a6; margin-left: auto; }
.sel.short { width: 68px; margin-right: 148px; }
.sel.dest { padding-left: 6px; }
.dn { width: 129px; overflow: hidden; white-space: nowrap; margin-left: 8px; }
.ms { margin-top: 8px; border-top: 1px solid #3f4145; height: 72px; display: flex; justify-content: space-between; align-items: center; padding: 0 31px 0 25px; }
.row { position: relative; top: -1px; }
.acts { margin-top: auto; padding: 0 16px 16px 0; display: flex; justify-content: flex-end; gap: 9px; }
.acts button { font: 500 13px Roboto, sans-serif; height: 32px; border-radius: 4px; padding: 0 0 1px; }
.pr { width: 66px; border: 0; background: #8ab4f8; color: #202124; box-shadow: 0 0 0 2px #54709c; }
.ca { width: 74px; border: 1px solid #5f6368; background: none; color: #8ab4f8; }
```
FILE: app.js
```js
const A = 'انتظــام,', B = 'انتســاب,';
const H = 'الدراسات الانسانية بنات ', D = 'الدراسات الاسلامية والعربية ', K = 'كلية ' + D, Z = 'كلية البنات الازهرية بالعاشر من رمضان شعبة ';
const T = H + 'تفهنا الاشراف دقهلية ', Q = K + 'بمدينة القرين بالشرقية شعبة ', M = K + 'بدمنهور بحيرة شعبة ', P = K + 'ببورسعيد شعبة ';

// [row height, right lines, left lines]; a line is [text, width]
const rows = [
  [23.5, [[H + 'بالقاهرة اللغة التركية ' + A, 148]], [[Q + 'الشريعة', 192], ['الاسلامية ' + B, 52]]],
  [22.5, [[H + 'بالقاهرة شعبة اللغات الاوربية ت . فورية', 179], ['(فرنسي) ' + A, 49]], [[Q + 'اللغة', 183], ['العربية ' + B, 46]]],
  [22.5, [[T + 'قسم رياض الاطفال', 179], [A, 22]], [[Z + 'اصول الدين ' + A, 187]]],
  [22.8, [[H + 'بالقاهرة قسم اللغة الالمانية ' + A, 163]], [[Z + 'الشريعة الاسلامية', 180], [A, 22]]],
  [12.7, [[H + 'بالقاهرة قسم اللغة الاسبانية ' + A, 164]], [[Z + 'اللغة العربية ' + A, 187]]],
  [22.5, [[H + 'بالقاهرة الجغرافيا ' + A, 139]], [[Z + 'الترجمة الفورية', 174], ['(انجليزى فقط) ' + A, 64]]],
  [23, [[T + 'اللغه الانجليزيه ترجمه', 188], ['فوريه ' + A, 40]], [[Z + 'اصول الدين ' + B, 190]]],
  [22.5, [[T + 'شعبه التربيه ' + A, 184]], [[Z + 'الشريعة الاسلامية', 180], [B, 25]]],
  [12.5, [[T + 'التاريخ ' + A, 169]], [[Z + 'اللغة العربية ' + B, 190]]],
  [13, [[T + 'علم النفس ' + A, 177]], [[D + 'بنات المنصورة اصول الدين ' + B, 184]]],
  [21.5, [[T + 'قسم الاجتماع ' + A, 186]], [[D + 'بنات المنصورة الشريعه الاسلاميه', 173], [B, 25]]],
  [12.5, [['التجارة بنات تفهنا الاشراف دقهلية تخصص عام ' + A, 154]], [[D + 'بنات المنصورة اللغة العربية ' + B, 184]]],
  [23, [['فصول التربية الرياضية بنات بالخانكة ' + A, 127]], [[P + 'اصول الدين', 170], [A, 22]]],
  [23, [[D + 'بنات بالقاهرة شعبة الشريعة والقانون', 180], ['باللغة الانجليزية ' + A, 68]], [[P + 'الشريعة الاسلامية', 186], [A, 22]]],
  [23, [[D + 'بنات الزقازيق الشريعة الاسلامية', 170], [A, 21]], [[P + 'اللغة العربية', 170], [A, 22]]],
  [22.5, [[D + 'بنات الزقازيق اللغة العربية ' + A, 178]], [[P + 'اصول الدين', 170], [B, 25]]],
  [22.5, [[D + 'بنات الزقازيق اصول الدين ' + A, 178]], [[P + 'اللغة العربية', 170], [B, 25]]],
  [23, [[Q + 'اصول', 189], ['الدين ' + A, 38]], [[M + 'اصول الدين', 184], [A, 22]]],
  [23, [[Q + 'الشريعة', 192], ['الاسلامية ' + A, 50]], [[M + 'الشريعة', 173], ['الاسلامية ' + A, 50]]],
  [23, [[Q + 'اللغة', 183], ['العربية ' + A, 43]], [[M + 'اللغة العربية', 185], [A, 22]]],
  [23, [[D + 'بنات بالقاهرة شعبة الصحافة والاعلام', 183], [A, 22]], [[M + 'الشريعة', 173], ['والقانون ' + A, 46]]],
  [23, [['معهد نظم المعلومات الادارية بكلية التجارة بنات بتفهنا الاشراف', 173], [A, 22]], [[M + 'اصول الدين', 184], [B, 25]]],
  [12, [['معهد معاوني القضاء بكلية ' + D + 'بنات بالقاهرة', 190]], [[M + 'الشريعة', 173]]]
];

const cell = (lines, k) => '<div dir="rtl">' + lines.map(l => `<span data-w="${l[1] * k}">${l[0]}</span>`).join('') + '</div>';
const render = (i, k, h) => `<div class="lr" style="height:${h}px">${cell(rows[i][2], k)}<div class="no"><span>${i + 31}.</span></div>${cell(rows[i][1], k)}<div class="no"><span>${i + 1}.</span></div></div>`;
document.getElementById('prevList').innerHTML = rows.map((r, i) => render(i, 1, r[0])).join('');
document.getElementById('pageList').innerHTML = [[11, 17.5], [12, 34], [13, 34], [14, 34]].map(r => render(r[0], 1.484, r[1])).join('');

// condense or widen each label to its set width
document.querySelectorAll('[data-w]').forEach(el => {
  const inner = document.createElement('span');
  inner.className = 'in';
  while (el.firstChild) inner.appendChild(el.firstChild);
  el.appendChild(inner);
  el.classList.add('fit');
  const w = +el.dataset.w;
  const natural = inner.getBoundingClientRect().width;
  el.style.width = w + 'px';
  inner.style.transform = `scaleX(${w / natural})`;
});

// QR symbol: finder and alignment squares over a filled module grid
const N = 49, g = [];
let s = 813492;
for (let y = 0; y < N; y++) { g.push([]); for (let x = 0; x < N; x++) { s = (s * 1103515245 + 12345) % 2147483648; g[y].push((s >> 16) & 1); } }
const square = (x0, y0, n, pad) => {
  for (let y = -pad; y < n + pad; y++) for (let x = -pad; x < n + pad; x++) {
    const Y = y0 + y, X = x0 + x;
    if (X < 0 || Y < 0 || X >= N || Y >= N) continue;
    const d = Math.min(x, y, n - 1 - x, n - 1 - y);
    g[Y][X] = d >= 0 && d !== 1 ? 1 : 0;
  }
};
[[0, 0], [42, 0], [0, 42]].forEach(p => square(p[0], p[1], 7, 1));
[[22, 4], [4, 22], [22, 22], [40, 22], [22, 40], [40, 40]].forEach(p => square(p[0], p[1], 5, 0));
let d = '';
g.forEach((r, y) => r.forEach((v, x) => { if (v) d += `M${x} ${y}h1v1h-1z`; }));
document.getElementById('qr').innerHTML = `<path d="${d}" fill="#000"/>`;
```
